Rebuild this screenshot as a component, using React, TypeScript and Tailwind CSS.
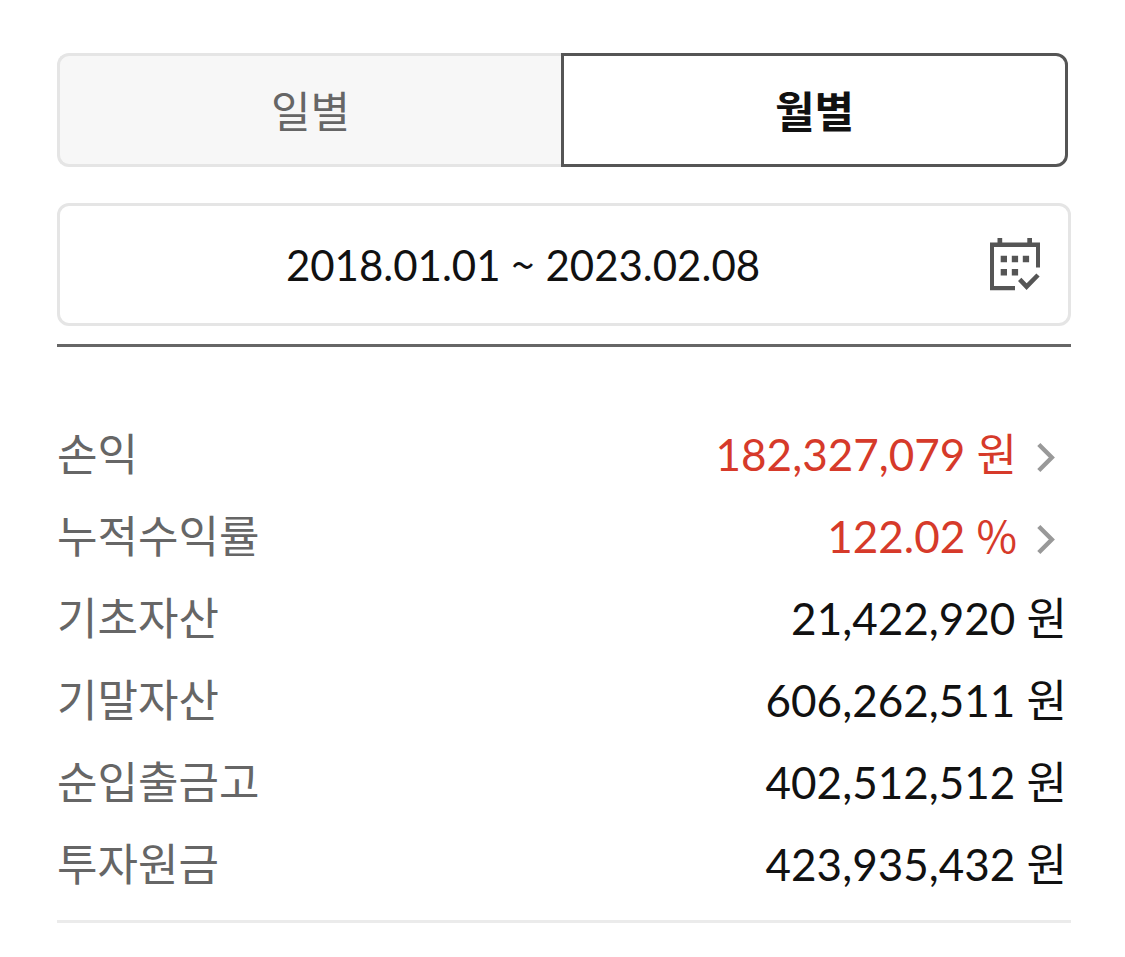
import { useState } from "react";

type Row = { label: string; value: string; unit: string; link?: boolean };

const rows: Row[] = [
  { label: "손익", value: "182,327,079", unit: "원", link: true },
  { label: "누적수익률", value: "122.02", unit: "%", link: true },
  { label: "기초자산", value: "21,422,920", unit: "원" },
  { label: "기말자산", value: "606,262,511", unit: "원" },
  { label: "순입출금고", value: "402,512,512", unit: "원" },
  { label: "투자원금", value: "423,935,432", unit: "원" },
];

function CalendarIcon() {
  return (
    <svg width="50" height="54" viewBox="0 0 50 54" fill="none" aria-hidden="true">
      <path d="M0 4.5H50V29.5H46V9H4V48H25V52.3H0z" fill="#555" />
      <path d="M7.5 0h4.7v5H7.5zM37.3 0H42v5h-4.7z" fill="#555" />
      <path
        d="M10.7 17.7h6.3v6.6h-6.3zM21.8 17.7h6.3v6.6h-6.3zM32.8 17.7h6.3v6.6h-6.3zM10.7 30.9h6.3v6.6h-6.3zM21.8 30.9h6.3v6.6h-6.3z"
        fill="#555"
      />
      <path d="M29.7 41.3L36.6 48.6L48 37" stroke="#555" strokeWidth="4.6" />
    </svg>
  );
}

function Chevron() {
  return (
    <svg className="mt-2" width="20" height="32" viewBox="0 0 20 32" fill="none" aria-hidden="true">
      <path d="M1.8 2.5L14.8 15.5L1.8 28.5" stroke="#999" strokeWidth="4.4" />
    </svg>
  );
}

function Amount({ value, unit }: { value: string; unit: string }) {
  return (
    <span>
      {value} <span className="font-['Noto_Sans_CJK_KR',sans-serif] leading-none">{unit}</span>
    </span>
  );
}

export default function App() {
  const [tab, setTab] = useState("월별");
  return (
    <main className="bg-white pt-[53px] pr-[54px] pb-8 pl-[57px] font-[Lato,'Noto_Sans_CJK_KR',sans-serif] text-[#111]">
      <div className="mr-[3px] flex h-[114px]">
        {["일별", "월별"].map((name, i) => (
          <button
            key={name}
            type="button"
            aria-pressed={tab === name}
            onClick={() => setTab(name)}
            className={`flex-1 border-3 pt-1 text-[43px] ${i === 0 ? "rounded-l-xl" : "rounded-r-xl"} ${
              tab === name
                ? "border-[#555] bg-white font-bold text-[#111]"
                : i === 0
                  ? "border-[#e5e5e5] border-r-0 bg-[#f7f7f7] text-[#666]"
                  : "border-[#e5e5e5] border-l-0 bg-[#f7f7f7] text-[#666]"
            }`}
          >
            {name}
          </button>
        ))}
      </div>
      <button
        type="button"
        className="mt-9 flex h-[123px] w-full items-center rounded-xl border-3 border-[#e5e5e5] pr-7 text-[42px] leading-[60px]"
      >
        <span className="flex-1 pr-1">
          2018.01.01 <span className="font-['Noto_Sans_CJK_KR',sans-serif] leading-none">~</span> 2023.02.08
        </span>
        <CalendarIcon />
      </button>
      <hr className="mt-[18px] border-t-3 border-[#666]" />
      <dl className="mt-[66px] border-b-3 border-[#ebebeb] pb-[15px] text-[44px] leading-[66px]">
        {rows.map((r) => (
          <div key={r.label} className="flex h-[82px] items-center justify-between">
            <dt className="text-[#666]">{r.label}</dt>
            <dd className={r.link ? "text-[#d63a2a]" : "pr-1"}>
              {r.link ? (
                <a href="#detail" className="flex items-center gap-5 pr-[14px]">
                  <Amount value={r.value} unit={r.unit} />
                  <Chevron />
                </a>
              ) : (
                <Amount value={r.value} unit={r.unit} />
              )}
            </dd>
          </div>
        ))}
      </dl>
    </main>
  );
}
